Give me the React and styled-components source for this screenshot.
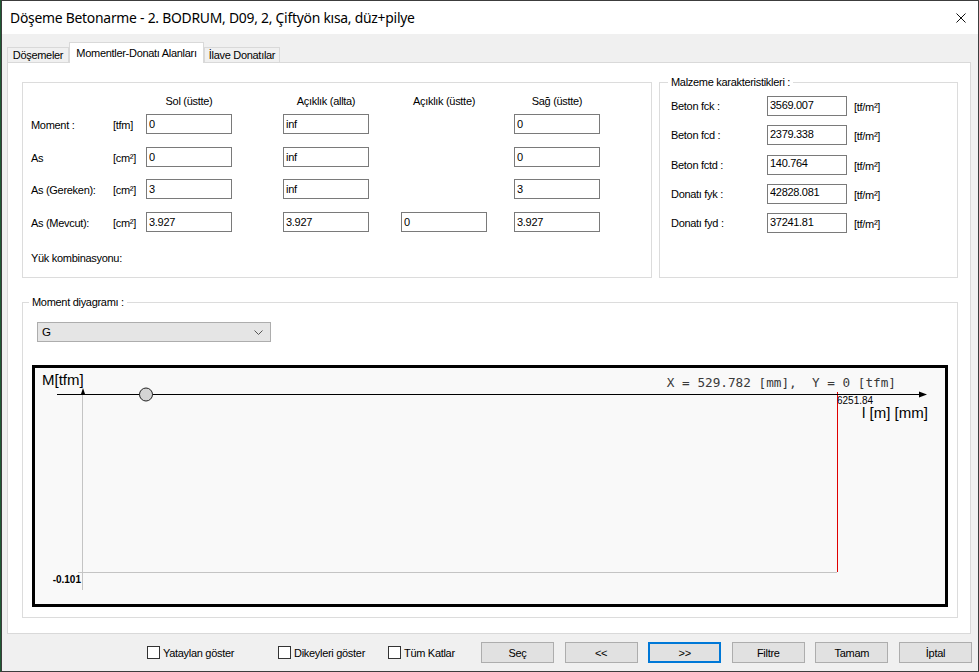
import React from 'react';
import styled, { createGlobalStyle } from 'styled-components';

const GlobalStyle = createGlobalStyle`
  html, body {
    margin: 0;
    padding: 0;
    background: #1f5a33;
  }
  body {
    width: 979px;
    height: 672px;
    overflow: hidden;
  }
`;

const COLS = '82px 33px 137px 118px 113px 86px';

const momentRows = [
  { label: 'Moment :', unit: '[tfm]', values: ['0', 'inf', null, '0'] },
  { label: 'As', unit: '[cm²]', values: ['0', 'inf', null, '0'] },
  { label: 'As (Gereken):', unit: '[cm²]', values: ['3', 'inf', null, '3'] },
  { label: 'As (Mevcut):', unit: '[cm²]', values: ['3.927', '3.927', '0', '3.927'] },
];

const materials = [
  { label: 'Beton fck :', value: '3569.007' },
  { label: 'Beton fcd :', value: '2379.338' },
  { label: 'Beton fctd :', value: '140.764' },
  { label: 'Donatı fyk :', value: '42828.081' },
  { label: 'Donatı fyd :', value: '37241.81' },
];

const tabs = [
  { text: 'Döşemeler', w: 62 },
  { text: 'Momentler-Donatı Alanları', w: 135, active: true },
  { text: 'İlave Donatılar', w: 76 },
];

const checks = [
  { text: 'Yataylan göster', w: 131 },
  { text: 'Dikeyleri göster', w: 110 },
  { text: 'Tüm Katlar', w: 93 },
];

const buttons = ['Seç', '<<', '>>', 'Filtre', 'Tamam', 'İptal'];

function App() {
  return (
    <>
      <GlobalStyle />
      <Window>
        <TitleBar>
          <Title>Döşeme Betonarme - 2. BODRUM, D09, 2, Çiftyön kısa, düz+pilye</Title>
          <CloseIcon width="10" height="10" viewBox="0 0 10 10">
            <path d="M0.5 0.5 L9.5 9.5 M9.5 0.5 L0.5 9.5" stroke="#111" strokeWidth="1" />
          </CloseIcon>
        </TitleBar>

        <Body>
          <TabStrip>
            {tabs.map((t) => (
              <Tab key={t.text} $w={t.w} $active={t.active}>{t.text}</Tab>
            ))}
          </TabStrip>

          <Panel>
            <TopRow>
              <Group>
                <HeaderGrid>
                  <span />
                  <span />
                  <HeaderCell>Sol (üstte)</HeaderCell>
                  <HeaderCell>Açıklık (allta)</HeaderCell>
                  <HeaderCell>Açıklık (üstte)</HeaderCell>
                  <HeaderCell>Sağ (üstte)</HeaderCell>
                </HeaderGrid>
                <FieldGrid>
                  {momentRows.map((r) => (
                    <React.Fragment key={r.label}>
                      <RowLabel>{r.label}</RowLabel>
                      <RowLabel>{r.unit}</RowLabel>
                      {r.values.map((v, i) =>
                        v === null ? <span key={i} /> : <TextBox key={i} $w={86} value={v} readOnly />
                      )}
                    </React.Fragment>
                  ))}
                </FieldGrid>
                <Combo>Yük kombinasyonu:</Combo>
              </Group>

              <Group>
                <Legend $left={8}>Malzeme karakteristikleri :</Legend>
                <MaterialGrid>
                  {materials.map((m) => (
                    <React.Fragment key={m.label}>
                      <MatLabel>{m.label}</MatLabel>
                      <TextBox $w={80} $top value={m.value} readOnly />
                      <MatUnit>[tf/m²]</MatUnit>
                    </React.Fragment>
                  ))}
                </MaterialGrid>
              </Group>
            </TopRow>

            <DiagramGroup>
              <Legend $left={6}>Moment diyagramı :</Legend>
              <Select>
                <span>G</span>
                <svg width="9" height="5" viewBox="0 0 9 5">
                  <polyline points="0.5,0.5 4.5,4.5 8.5,0.5" fill="none" stroke="#555" strokeWidth="1" />
                </svg>
              </Select>
              <ChartFrame>
                <svg width="910" height="236" viewBox="0 0 910 236">
                  <line x1="47.5" y1="26" x2="47.5" y2="222" stroke="#c4c4c4" />
                  <line x1="43" y1="204.5" x2="802" y2="204.5" stroke="#c4c4c4" />
                  <line x1="802.5" y1="24" x2="802.5" y2="204" stroke="#e00000" />
                  <line x1="22" y1="26.5" x2="888" y2="26.5" stroke="#000" />
                  <polygon points="884,23.5 892,26.5 884,29.5" fill="#000" />
                  <polygon points="46,26 50,26 48,20" fill="#000" />
                  <circle cx="111" cy="26.5" r="6.5" fill="#d4d4d4" stroke="#222" />
                  <AxisTitle x="7" y="17">M[tfm]</AxisTitle>
                  <AxisTitle x="827" y="50">l [m] [mm]</AxisTitle>
                  <Coord x="861" y="19" textAnchor="end">{'X = 529.782 [mm],  Y = 0 [tfm]'}</Coord>
                  <SmallValue x="802" y="36">6251.84</SmallValue>
                  <MinValue x="46" y="215" textAnchor="end">-0.101</MinValue>
                </svg>
              </ChartFrame>
            </DiagramGroup>
          </Panel>

          <BottomBar>
            {checks.map((c) => (
              <CheckItem key={c.text} $w={c.w}>
                <CheckBox />
                <span>{c.text}</span>
              </CheckItem>
            ))}
            <ButtonRow>
              {buttons.map((b) => (
                <Button key={b} $focused={b === '>>'}>{b}</Button>
              ))}
            </ButtonRow>
          </BottomBar>
        </Body>
      </Window>
    </>
  );
}

const Window = styled.div`
  width: 978px;
  height: 672px;
  margin-left: 1px;
  box-sizing: border-box;
  border: 1px solid #3c3c3c;
  background: #f0f0f0;
  display: flex;
  flex-direction: column;
  font-family: "Liberation Sans", Arial, sans-serif;
  font-size: 11px;
  letter-spacing: -0.3px;
  color: #000;
`;

const TitleBar = styled.div`
  flex: 0 0 33px;
  background: #fff;
  display: flex;
  align-items: center;
  justify-content: space-between;
  padding: 0 12px 0 8px;
`;

const Title = styled.div`
  font-family: "Noto Sans", "Open Sans", sans-serif;
  font-size: 13.9px;
  letter-spacing: -0.25px;
`;

const CloseIcon = styled.svg`
  display: block;
`;

const Body = styled.div`
  flex: 1;
  display: flex;
  flex-direction: column;
  padding: 8px 7px 0 5px;
`;

const TabStrip = styled.div`
  display: flex;
  align-items: flex-end;
  height: 20px;
  position: relative;
  z-index: 1;
`;

const Tab = styled.div`
  width: ${({ $w }) => $w}px;
  height: ${({ $active }) => ($active ? 21 : 15)}px;
  margin-bottom: ${({ $active }) => ($active ? -1 : 0)}px;
  box-sizing: border-box;
  border: 1px solid #d9d9d9;
  border-bottom: none;
  background: ${({ $active }) => ($active ? '#fff' : '#f0f0f0')};
  display: flex;
  align-items: center;
  justify-content: center;
  white-space: nowrap;
`;

const Panel = styled.div`
  height: 572px;
  box-sizing: border-box;
  background: #fff;
  border: 1px solid #d9d9d9;
  padding: 19px 0 0 14px;
`;

const TopRow = styled.div`
  display: grid;
  grid-template-columns: 630px 299px;
  column-gap: 7px;
  height: 196px;
`;

const Group = styled.div`
  position: relative;
  box-sizing: border-box;
  border: 1px solid #dcdcdc;
  padding-left: 8px;
`;

const Legend = styled.span`
  position: absolute;
  top: -7px;
  left: ${({ $left }) => $left}px;
  padding: 0 3px;
  background: #fff;
  line-height: 13px;
`;

const HeaderGrid = styled.div`
  display: grid;
  grid-template-columns: ${COLS};
  margin-top: 12px;
  height: 13px;
  line-height: 13px;
`;

const HeaderCell = styled.span`
  width: 86px;
  text-align: center;
`;

const FieldGrid = styled.div`
  display: grid;
  grid-template-columns: ${COLS};
  grid-auto-rows: 20px;
  row-gap: 12.7px;
  margin-top: 6px;
`;

const RowLabel = styled.span`
  padding-top: 5px;
  line-height: 13px;
  white-space: nowrap;
`;

const TextBox = styled.input`
  width: ${({ $w }) => $w}px;
  height: 20px;
  box-sizing: border-box;
  margin: 0;
  border: 1px solid #7a7a7a;
  border-radius: 0;
  padding: ${({ $top }) => ($top ? '0 2px 3px' : '0 2px')};
  background: #fff;
  font-family: "Liberation Sans", Arial, sans-serif;
  font-size: 11px;
  letter-spacing: -0.3px;
  color: #000;
  outline: none;
`;

const Combo = styled.div`
  margin-top: 20px;
  line-height: 13px;
`;

const MaterialGrid = styled.div`
  display: grid;
  grid-template-columns: 96px 87px auto;
  grid-auto-rows: 20px;
  row-gap: 9.3px;
  padding: 13px 0 0 3px;
`;

const MatLabel = styled.span`
  padding-top: 4px;
  line-height: 13px;
`;

const MatUnit = styled.span`
  padding-top: 5px;
  line-height: 13px;
`;

const DiagramGroup = styled(Group)`
  width: 936px;
  height: 316px;
  margin-top: 24px;
  padding: 19px 9px 0 9px;
`;

const Select = styled.div`
  width: 234px;
  height: 20px;
  margin-left: 5px;
  box-sizing: border-box;
  background: #e5e5e5;
  border: 1px solid #adadad;
  display: flex;
  align-items: center;
  justify-content: space-between;
  padding: 0 7px 0 4px;
  font-size: 11.5px;
`;

const ChartFrame = styled.div`
  margin-top: 23px;
  width: 916px;
  height: 242px;
  box-sizing: border-box;
  border: 3px solid #000;
  background: #f9f9f9;
  svg {
    display: block;
  }
`;

const AxisTitle = styled.text`
  font-family: "Liberation Sans", Arial, sans-serif;
  font-size: 15px;
  letter-spacing: 0;
  fill: #000;
`;

const Coord = styled.text`
  font-family: "DejaVu Sans Mono", "Liberation Mono", monospace;
  font-size: 12.7px;
  letter-spacing: 0;
  white-space: pre;
  fill: #3a3a3a;
`;

const SmallValue = styled.text`
  font-family: "Liberation Sans", Arial, sans-serif;
  font-size: 10px;
  letter-spacing: 0;
  fill: #000;
`;

const MinValue = styled.text`
  font-family: "Liberation Sans", Arial, sans-serif;
  font-size: 10px;
  font-weight: bold;
  letter-spacing: 0;
  fill: #000;
`;

const BottomBar = styled.div`
  flex: 1;
  display: flex;
  align-items: center;
  padding-left: 140px;
  margin-right: -4px;
`;

const CheckItem = styled.label`
  flex: 0 0 ${({ $w }) => $w}px;
  display: flex;
  align-items: center;
  gap: 3px;
  white-space: nowrap;
`;

const CheckBox = styled.span`
  width: 13px;
  height: 13px;
  box-sizing: border-box;
  border: 1px solid #333;
  background: #fff;
`;

const ButtonRow = styled.div`
  flex: 0 0 auto;
  display: flex;
  gap: 10.6px;
`;

const Button = styled.div`
  width: 73px;
  height: 21px;
  box-sizing: border-box;
  background: #e1e1e1;
  border: ${({ $focused }) => ($focused ? '2px solid #0078d7' : '1px solid #adadad')};
  display: flex;
  align-items: center;
  justify-content: center;
`;

export default App;
